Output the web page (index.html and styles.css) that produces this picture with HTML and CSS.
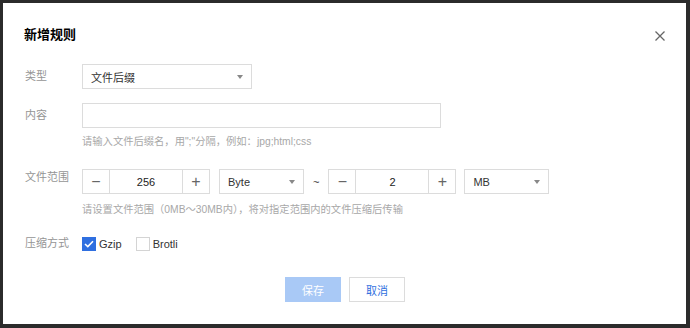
FILE: index.html
```html
<!DOCTYPE html>
<html lang="zh-CN">
<head>
    <meta charset="UTF-8">
    <meta name="viewport" content="width=device-width, initial-scale=1.0">
    <title>新增规则</title>
    <link rel="stylesheet" href="styles.css">
</head>
<body>
    <div class="dialog">
        <div class="dialog-header">
            <h2 class="dialog-title">新增规则</h2>
            <button class="close-btn" aria-label="关闭">
                <svg width="10" height="10" viewBox="0 0 10 10">
                    <path d="M0.5 0.5 L9.5 9.5 M9.5 0.5 L0.5 9.5" stroke="#666" stroke-width="1.3" fill="none"/>
                </svg>
            </button>
        </div>

        <div class="form">
            <div class="form-item">
                <label class="form-label">类型</label>
                <div class="form-control">
                    <div class="select select-type">
                        <span>文件后缀</span>
                        <i class="caret"></i>
                    </div>
                </div>
            </div>

            <div class="form-item item-content">
                <label class="form-label">内容</label>
                <div class="form-control">
                    <input class="text-input" type="text">
                    <p class="hint">请输入文件后缀名，用";"分隔，例如：jpg;html;css</p>
                </div>
            </div>

            <div class="form-item item-range">
                <label class="form-label label-top">文件范围</label>
                <div class="form-control">
                    <div class="range-row">
                        <div class="number-input">
                            <span class="step">&minus;</span>
                            <span class="value">256</span>
                            <span class="step">+</span>
                        </div>
                        <div class="select select-unit">
                            <span>Byte</span>
                            <i class="caret"></i>
                        </div>
                        <span class="tilde">~</span>
                        <div class="number-input">
                            <span class="step">&minus;</span>
                            <span class="value">2</span>
                            <span class="step">+</span>
                        </div>
                        <div class="select select-unit unit-last">
                            <span>MB</span>
                            <i class="caret"></i>
                        </div>
                    </div>
                    <p class="hint hint-range">请设置文件范围（0MB～30MB内），将对指定范围内的文件压缩后传输</p>
                </div>
            </div>

            <div class="form-item item-compress">
                <label class="form-label">压缩方式</label>
                <div class="form-control checks">
                    <label class="check">
                        <span class="box checked">
                            <svg width="10" height="8" viewBox="0 0 10 8">
                                <path d="M1 4 L3.8 6.6 L9 1.2" stroke="#fff" stroke-width="1.6" fill="none"/>
                            </svg>
                        </span>
                        Gzip
                    </label>
                    <label class="check">
                        <span class="box"></span>
                        Brotli
                    </label>
                </div>
            </div>
        </div>

        <div class="dialog-footer">
            <button class="btn btn-primary" disabled>保存</button>
            <button class="btn btn-default">取消</button>
        </div>
    </div>
</body>
</html>
```

FILE: styles.css
```css
* {
    box-sizing: border-box;
}

html, body {
    height: 100%;
}

body {
    margin: 0;
    padding: 3px 4px 4px 3px;
    background-color: #2b2b2b;
    font-family: "Liberation Sans", "Noto Sans CJK SC", sans-serif;
    font-size: 11px;
    color: #333;
}

.dialog {
    height: 100%;
    background-color: #fff;
    padding: 22px 21px 0 21px;
}

.dialog-header {
    display: flex;
    justify-content: space-between;
    align-items: center;
    height: 20px;
}

.dialog-title {
    margin: 0;
    font-size: 13px;
    font-weight: bold;
    color: #000;
    line-height: 20px;
}

.close-btn {
    display: flex;
    padding: 0;
    border: none;
    background: none;
    margin-top: 2px;
}

.form {
    margin-top: 19px;
}

.form-item {
    display: grid;
    grid-template-columns: 58px 1fr;
}

.form-label {
    line-height: 25px;
    color: #959595;
    padding-left: 1px;
}

.label-top {
    line-height: 16px;
}

.item-content {
    margin-top: 14px;
}

.item-range {
    margin-top: 18px;
}

.item-compress {
    margin-top: 12px;
}

.select {
    display: flex;
    justify-content: space-between;
    align-items: center;
    height: 25px;
    border: 1px solid #dcdcdc;
    padding: 0 8px 0 8px;
    color: #333;
}

.select-type {
    width: 170px;
}

.select-unit {
    width: 85px;
    margin-left: 9px;
}

.unit-last {
    margin-left: 8px;
}

.caret {
    width: 0;
    height: 0;
    border-left: 3.5px solid transparent;
    border-right: 3.5px solid transparent;
    border-top: 4px solid #888;
}

.text-input {
    display: block;
    width: 359px;
    height: 25px;
    border: 1px solid #dcdcdc;
    margin: 0;
    outline: none;
}

.hint {
    margin: 5px 0 0 0;
    font-size: 10.3px;
    line-height: 18px;
    color: #a8a8a8;
}

.hint-range {
    margin-top: 7px;
}

.range-row {
    display: flex;
    align-items: center;
}

.number-input {
    display: flex;
    width: 128px;
    height: 25px;
    border: 1px solid #dcdcdc;
}

.number-input .step {
    width: 26px;
    display: flex;
    justify-content: center;
    align-items: center;
    font-size: 16px;
    color: #666;
}

.number-input .value {
    flex: 1;
    display: flex;
    justify-content: center;
    align-items: center;
    border-left: 1px solid #dcdcdc;
    border-right: 1px solid #dcdcdc;
    color: #222;
}

.tilde {
    margin: 0 9px;
    color: #333;
}

.checks {
    display: flex;
    align-items: center;
    height: 25px;
}

.check {
    display: flex;
    align-items: center;
    color: #333;
    margin-right: 14px;
}

.box {
    display: flex;
    justify-content: center;
    align-items: center;
    width: 14px;
    height: 14px;
    border: 1px solid #d4d4d4;
    margin-right: 3px;
}

.box.checked {
    background-color: #2f6fe0;
    border-color: #2f6fe0;
}

.dialog-footer {
    display: flex;
    justify-content: center;
    gap: 8px;
    margin-top: 21px;
    padding-left: 1px;
}

.btn {
    width: 56px;
    height: 25px;
    font-family: "Liberation Sans", "Noto Sans CJK SC", sans-serif;
    font-size: 11px;
    border: 1px solid #dcdcdc;
    background-color: #fff;
    padding: 0;
}

.btn-primary {
    background-color: #a9c9f6;
    border-color: #a9c9f6;
    color: #fff;
}

.btn-default {
    color: #2f6fe0;
}
```
